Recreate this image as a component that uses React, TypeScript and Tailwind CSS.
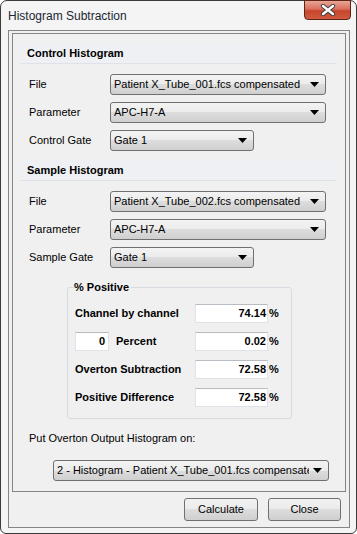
import React from 'react';

const font = "font-['Liberation_Sans','Arial',sans-serif]";

// windows 7 style combo box
function Combo({ value, w }: { value: string; w: string }) {
  return (
    <div
      className={`${w} flex h-[21px] items-center overflow-hidden rounded-[3px] border border-[#707070] bg-[linear-gradient(to_bottom,#f3f3f3_0%,#ebebeb_50%,#dddddd_50%,#cfcfcf_100%)] pl-[3px] pr-[6px]`}
    >
      <span className="flex-1 overflow-hidden whitespace-nowrap leading-[15px] text-black">{value}</span>
      <svg width="9" height="5" viewBox="0 0 9 5" className="ml-[4px] shrink-0">
        <path d="M0 0 H9 L4.5 5 Z" fill="#000" />
      </svg>
    </div>
  );
}

function Row({ label, value, w }: { label: string; value: string; w: string }) {
  return (
    <div className="flex items-center pl-[8px]">
      <span className="w-[81px] text-black">{label}</span>
      <Combo value={value} w={w} />
    </div>
  );
}

function Header({ title }: { title: string }) {
  return (
    <div className="flex h-[21px] items-center border-b border-[#dfe2e8] bg-[#eef0f4] pl-[6px] font-bold text-black">
      {title}
    </div>
  );
}

function ValueBox({ value }: { value: string }) {
  return (
    <div className="flex items-center">
      <div className="flex h-[19px] w-[73px] items-center justify-end border border-[#dfe3e8] border-t-[#b9bcc2] bg-white pr-[1px] font-bold">
        {value}
      </div>
      <span className="ml-[1px] font-bold">%</span>
    </div>
  );
}

function Button({ label, w }: { label: string; w: string }) {
  return (
    <div
      className={`${w} flex h-[23px] items-center justify-center rounded-[3px] border border-[#707070] bg-[linear-gradient(to_bottom,#f2f2f2_0%,#ebebeb_50%,#dddddd_50%,#cfcfcf_100%)] text-black`}
    >
      {label}
    </div>
  );
}

export default function App() {
  return (
    <div className={`${font} text-[11px] leading-none text-black`}>
      <div className="relative flex h-[534px] w-[357px] flex-col rounded-t-[7px] rounded-b-[6px] border border-[#3a3a3a] bg-[#f4f4f4]">
        {/* title bar */}
        <div className="flex h-[29px] items-center pl-[7px] pt-[1px] text-[12px] text-[#1b2633]">
          Histogram Subtraction
        </div>
        <div className="absolute right-[5px] top-[-1px] flex h-[20px] w-[47px] items-center justify-center rounded-b-[4px] border border-[#5e2418] bg-[linear-gradient(to_bottom,#e9a596_0%,#d8705c_45%,#c7452c_55%,#cf5b3f_100%)]">
          <svg width="16" height="12" viewBox="0 0 16 12">
            <path d="M3 2 L13 10 M13 2 L3 10" stroke="#3d3d3d" strokeWidth="4.2" strokeLinecap="round" />
            <path d="M3 2 L13 10 M13 2 L3 10" stroke="#ffffff" strokeWidth="2.4" strokeLinecap="round" />
          </svg>
        </div>

        {/* client area */}
        <div className="mb-[5px] ml-[7px] mr-[6px] flex flex-1 flex-col border border-[#858585] bg-[#f0f0f0]">
          <div className="mx-[3px] mt-[2px] flex h-[459px] flex-col border border-[#848484] px-[8px] pt-[9px]">
            <Header title="Control Histogram" />
            <div className="mt-[10px] flex flex-col gap-[7px]">
              <Row label="File" value="Patient X_Tube_001.fcs compensated" w="w-[216px]" />
              <Row label="Parameter" value="APC-H7-A" w="w-[216px]" />
              <Row label="Control Gate" value="Gate 1" w="w-[144px]" />
            </div>

            <div className="mt-[9px]">
              <Header title="Sample Histogram" />
            </div>
            <div className="mt-[10px] flex flex-col gap-[7px]">
              <Row label="File" value="Patient X_Tube_002.fcs compensated" w="w-[216px]" />
              <Row label="Parameter" value="APC-H7-A" w="w-[216px]" />
              <Row label="Sample Gate" value="Gate 1" w="w-[144px]" />
            </div>

            {/* % Positive group */}
            <div className="relative ml-[46px] mt-[19px] flex w-[225px] flex-col gap-[9px] rounded-[3px] border border-[#d5dbe1] pb-[11px] pl-[7px] pt-[16px]">
              <span className="absolute left-[6px] top-[-6px] bg-[#f0f0f0] pr-[2px] font-bold">% Positive</span>
              <div className="flex items-center">
                <span className="w-[120px] font-bold">Channel by channel</span>
                <ValueBox value="74.14" />
              </div>
              <div className="flex items-center">
                <div className="flex h-[19px] w-[34px] items-center justify-end border border-[#dfe3e8] border-t-[#b9bcc2] bg-white pr-[3px] font-bold">
                  0
                </div>
                <span className="ml-[7px] w-[79px] font-bold">Percent</span>
                <ValueBox value="0.02" />
              </div>
              <div className="flex items-center">
                <span className="w-[120px] font-bold">Overton Subtraction</span>
                <ValueBox value="72.58" />
              </div>
              <div className="flex items-center">
                <span className="w-[120px] font-bold">Positive Difference</span>
                <ValueBox value="72.58" />
              </div>
            </div>

            <div className="mt-[14px] pl-[8px]">Put Overton Output Histogram on:</div>
            <div className="ml-[32px] mt-[16px]">
              <Combo value="2 - Histogram - Patient X_Tube_001.fcs compensated" w="w-[276px]" />
            </div>
          </div>

          {/* buttons */}
          <div className="mt-[6px] flex justify-end gap-[10px] pr-[8px]">
            <Button label="Calculate" w="w-[74px]" />
            <Button label="Close" w="w-[73px]" />
          </div>
        </div>
      </div>
    </div>
  );
}
